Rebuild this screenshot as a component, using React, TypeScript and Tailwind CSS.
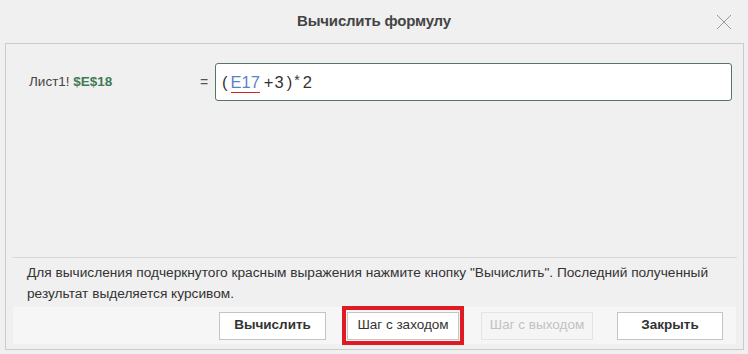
import React from 'react';

const font = { fontFamily: '"Liberation Sans", Arial, sans-serif' };

const DialogButton: React.FC<{ label: string; bold?: boolean; disabled?: boolean; width: string }> = ({ label, bold, disabled, width }) => (
  <button
    disabled={disabled}
    className={`h-[28px] ${width} border text-[13.5px] ${
      disabled
        ? 'border-[#e4e4e4] bg-[#f5f5f5] text-[#c2c2c2]'
        : 'border-[#c4c4c4] bg-white text-[#333]'
    } ${bold ? 'font-bold' : ''}`}
  >
    {label}
  </button>
);

const App: React.FC = () => {
  return (
    <div className="w-[748px] h-[354px] bg-[#f0f0f0] flex flex-col overflow-hidden" style={font}>
      {/* Title bar */}
      <div className="h-[43px] relative flex items-center justify-center shrink-0">
        <span className="text-[15px] font-bold text-[#444] tracking-[-0.2px]">Вычислить формулу</span>
        <button className="absolute right-[16px] top-[14px] w-[16px] h-[16px] text-[#999]">
          <svg viewBox="0 0 16 16" width="16" height="16" fill="none" stroke="currentColor" strokeWidth="1">
            <path d="M1 1 L15 15 M15 1 L1 15" />
          </svg>
        </button>
      </div>

      {/* Body panel */}
      <div className="flex-1 ml-[5px] mr-[4px] mb-[4px] border border-[#cbcbcb] flex flex-col">
        <div className="flex items-center pt-[19px] pl-[23px] pr-[11px]">
          <div className="w-[171px] text-[13.5px] text-[#444]">
            Лист1! <span className="font-bold text-[#3f7a52]">$E$18</span>
          </div>
          <div className="w-[15px] text-[14px] text-[#555]">=</div>
          <div className="flex-1 h-[38px] bg-white border border-[#5b7565] rounded-[3px] flex items-center pl-[6px] text-[16.5px] text-[#333]">
            <span>(</span>
            <span className="ml-[3px] text-[#5b82c9] border-b border-[#c62828] leading-[20px]">E17</span>
            <span className="ml-[4px]">+</span>
            <span className="ml-[1px]">3</span>
            <span className="ml-[3px]">)</span>
            <span className="ml-[2px] text-[14px] -mt-[3px]">*</span>
            <span className="ml-[3px]">2</span>
          </div>
        </div>

        <div className="flex-1" />

        <div className="mx-[6px] border-t border-[#d9d9d9]" />
        <div className="pl-[21px] pt-[4px] pb-[3px] text-[13.7px] leading-[21px] text-[#333]">
          Для вычисления подчеркнутого красным выражения нажмите кнопку "Вычислить". Последний полученный
          <br />
          результат выделяется курсивом.
        </div>

        <div className="mx-[7px] mb-[5px] h-[37px] bg-[#f6f6f6] flex items-center">
          <div className="ml-[206px]">
            <DialogButton label="Вычислить" bold width="w-[107px]" />
          </div>
          <div className="ml-[16px] border-[4px] border-[#e01a22] px-[1px] h-[39px] flex items-center">
            <DialogButton label="Шаг с заходом" width="w-[112px]" />
          </div>
          <div className="ml-[17px]">
            <DialogButton label="Шаг с выходом" disabled width="w-[112px]" />
          </div>
          <div className="ml-[24px]">
            <DialogButton label="Закрыть" bold width="w-[106px]" />
          </div>
        </div>
      </div>
    </div>
  );
};

export default App;
